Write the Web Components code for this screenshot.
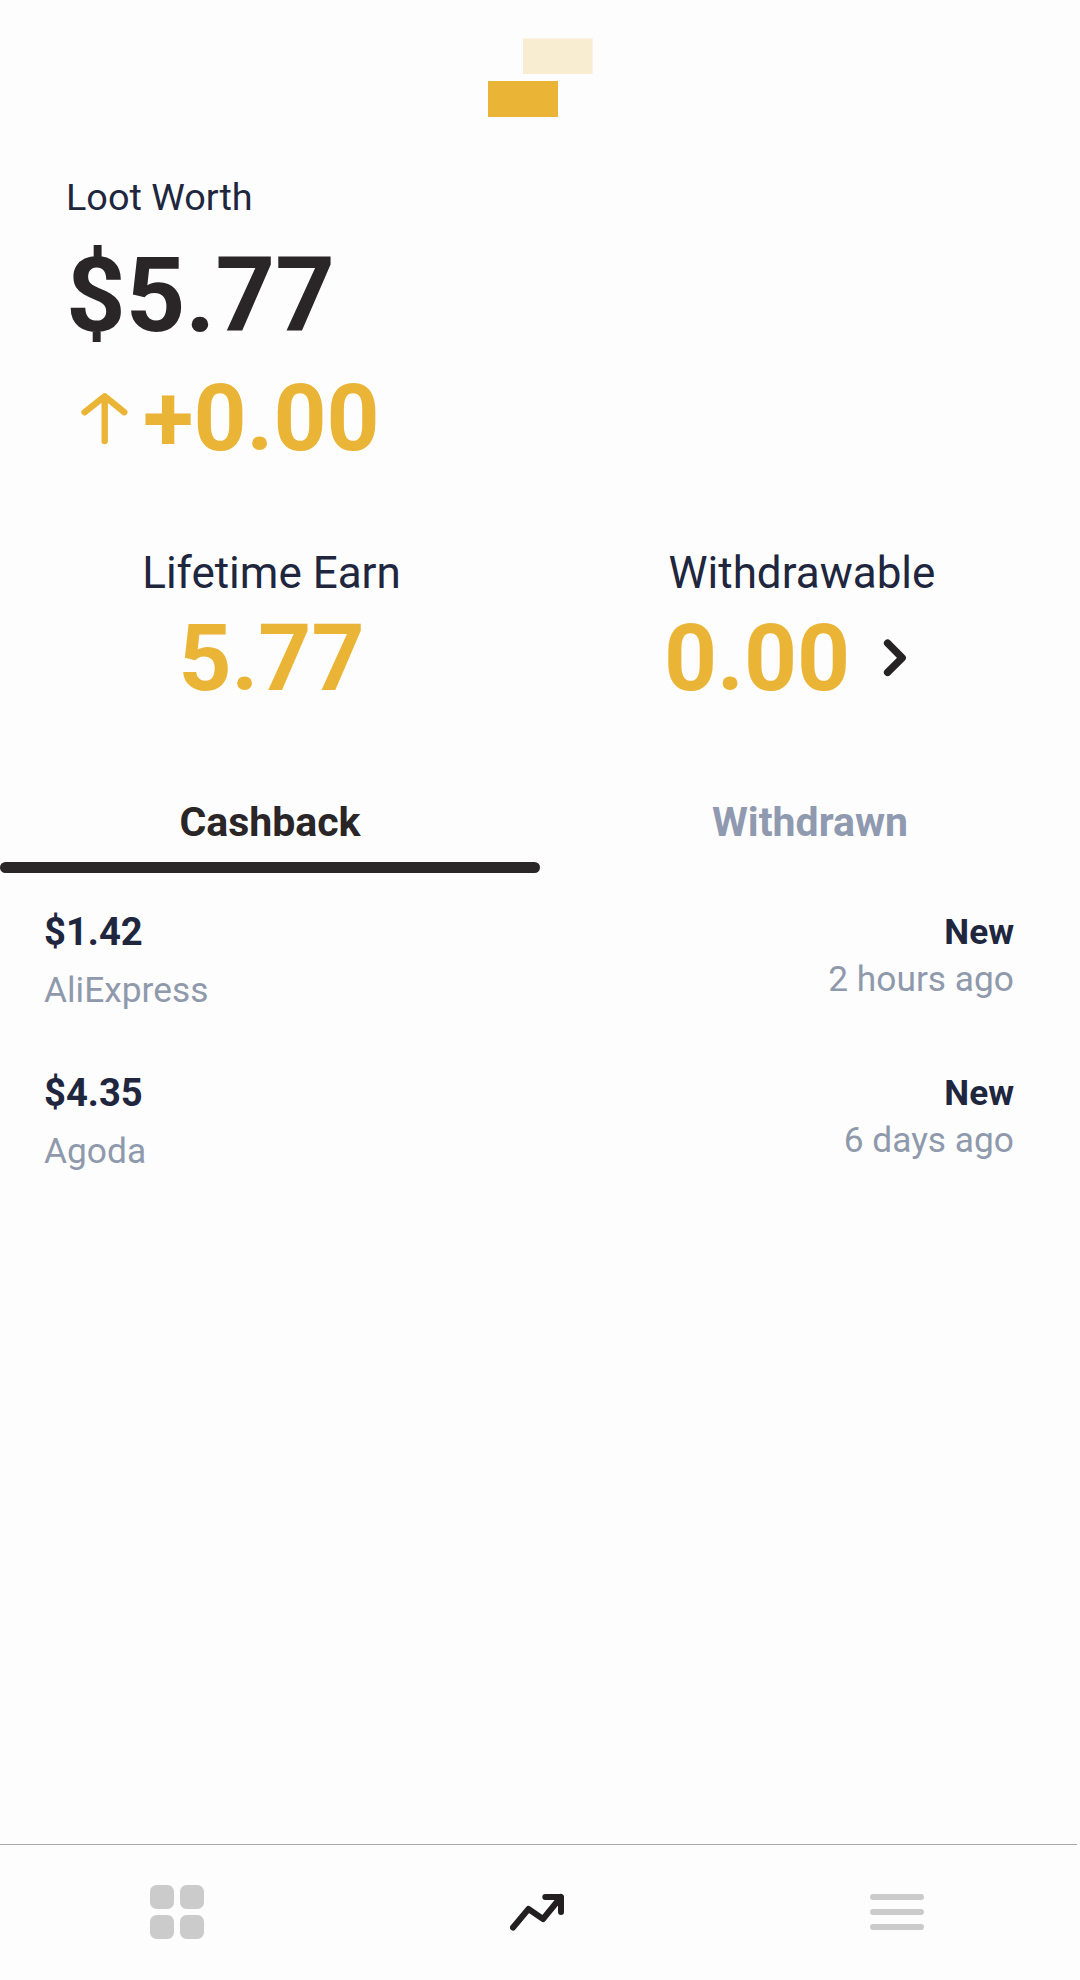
<!DOCTYPE html>
<html lang="en">
<head>
<meta charset="utf-8">
<title>Loot Worth</title>
<style>
  html, body { margin: 0; }
  body { background: #fdfdfd; font-family: Roboto, "Liberation Sans", sans-serif; color: #20263e; }
</style>
</head>
<body>
<loot-app></loot-app>
<script>
const define = (name, html) => customElements.define(name, class extends HTMLElement {
  constructor() {
    super();
    const t = document.createElement('template');
    t.innerHTML = html;
    this.attachShadow({ mode: 'open' }).append(t.content.cloneNode(true));
  }
});

define('brand-mark', `
<style>
  :host { display: flex; justify-content: center; height: 175px; padding-top: 38px; box-sizing: border-box; }
  svg { display: block; width: 106px; height: 80px; }
</style>
<svg viewBox="0 0 106 80"><rect x="36" y=".5" width="69.5" height="35.5" fill="#f8ecd1"/><rect x="1" y="43" width="70" height="36" fill="#eab536"/></svg>`);

define('worth-summary', `
<style>
  :host { display: flex; flex-direction: column; padding-left: 66px; }
  .label { font-size: 37.8px; line-height: 44px; }
  .total { margin-top: 16px; font-size: 104px; line-height: 122px; font-weight: 700; color: #2a2526; }
  .delta { display: flex; align-items: center; margin-top: 8px; font-size: 92.6px; line-height: 108px; font-weight: 700; color: #eab536; }
  svg { display: block; width: 77px; height: 108px; }
</style>
<div class="label"><slot name="label"></slot></div>
<div class="total"><slot name="total"></slot></div>
<div class="delta"><svg viewBox="66 365 77 108" fill="none" stroke="#eab536" stroke-width="6.4" stroke-linecap="round" stroke-linejoin="round"><path d="M104.7 441V396.5M84.6 412.2L104.7 396.2L124.3 412.2"/></svg><slot name="delta"></slot></div>`);

define('stat-block', `
<style>
  :host { display: flex; flex-direction: column; box-sizing: border-box; }
  .label { font-size: 44px; line-height: 52px; }
  .value { display: flex; margin-top: 6px; font-size: 92.6px; line-height: 108px; font-weight: 700; color: #eab536; }
</style>
<div class="label"><slot name="label"></slot></div>
<div class="value"><slot></slot></div>`);

define('chevron-right', `
<style>:host { display: block; margin-left: 29px; } svg { display: block; width: 32px; height: 108px; }</style>
<svg viewBox="880 605 32 108" fill="none" stroke="#262324" stroke-width="7.4" stroke-linecap="round" stroke-linejoin="round"><path d="M888.6 643.2L903.2 657.8L888.6 672.4"/></svg>`);

define('tab-item', `
<style>
  :host { display: flex; flex-direction: column; flex: 1; text-align: center; font-size: 41px; line-height: 48px; font-weight: 700; color: #8f99b0; }
  :host([active]) { color: #2a2526; }
  .bar { height: 11px; margin-top: 16px; border-radius: 6px; }
  :host([active]) .bar { background: #2a2526; }
</style>
<slot></slot><div class="bar"></div>`);

define('cashback-row', `
<style>
  :host { display: flex; justify-content: space-between; height: 161px; padding: 0 66px 0 44px; box-sizing: border-box; line-height: 44px; }
  .side { display: flex; flex-direction: column; gap: 14px; }
  .end { text-align: right; gap: 3px; }
  .amount { font-size: 38.2px; font-weight: 700; }
  .status { font-size: 35.2px; font-weight: 700; }
  .muted { font-size: 35.3px; color: #8f99ac; }
</style>
<div class="side"><div class="amount"><slot name="amount"></slot></div><div class="muted"><slot name="store"></slot></div></div>
<div class="side end"><div class="status"><slot name="status"></slot></div><div class="muted"><slot name="time"></slot></div></div>`);

define('bottom-nav', `
<style>
  :host { display: flex; flex-direction: column; margin-top: auto; height: 136px; }
  .rule { height: 1px; margin-right: 3px; background: #a9a9a9; }
  .items { display: flex; justify-content: space-between; padding: 40px 156px 0 150px; }
  svg { display: block; width: 54px; height: 54px; }
</style>
<div class="rule"></div>
<div class="items">
<svg viewBox="0 0 54 54" fill="#cbcbcb"><rect width="24" height="24" rx="6.5"/><rect x="30" width="24" height="24" rx="6.5"/><rect y="30" width="24" height="24" rx="6.5"/><rect x="30" y="30" width="24" height="24" rx="6.5"/></svg>
<svg viewBox="0 0 54 54" fill="none" stroke="#231f20" stroke-width="6" stroke-linecap="round" stroke-linejoin="round"><path d="M3 42.5L18.5 24L33 34L51 12M35.3 12H51V27"/></svg>
<svg viewBox="0 0 54 54" fill="#cbcbcb"><rect y="9" width="54" height="6" rx="3"/><rect y="24" width="54" height="6" rx="3"/><rect y="39" width="54" height="6" rx="3"/></svg>
</div>`);

define('loot-app', `
<style>
  :host { display: flex; flex-direction: column; width: 1080px; height: 1980px; overflow: hidden; }
  .stats { display: flex; margin-top: 74px; }
  .earn { width: 543px; align-items: center; }
  .cash { padding-left: 121px; }
  .cash [slot=label] { margin-left: 4.5px; }
  .tabs { display: flex; margin-top: 85px; }
  .list { display: flex; flex-direction: column; margin-top: 37px; }
</style>
<brand-mark></brand-mark>
<worth-summary><span slot="label">Loot Worth</span><span slot="total">$5.77</span><span slot="delta">+0.00</span></worth-summary>
<div class="stats">
  <stat-block class="earn"><span slot="label">Lifetime Earn</span>5.77</stat-block>
  <stat-block class="cash"><span slot="label">Withdrawable</span><span>0.00</span><chevron-right></chevron-right></stat-block>
</div>
<div class="tabs"><tab-item active>Cashback</tab-item><tab-item>Withdrawn</tab-item></div>
<div class="list">
  <cashback-row><span slot="amount">$1.42</span><span slot="store">AliExpress</span><span slot="status">New</span><span slot="time">2 hours ago</span></cashback-row>
  <cashback-row><span slot="amount">$4.35</span><span slot="store">Agoda</span><span slot="status">New</span><span slot="time">6 days ago</span></cashback-row>
</div>
<bottom-nav></bottom-nav>`);
</script>
</body>
</html>
